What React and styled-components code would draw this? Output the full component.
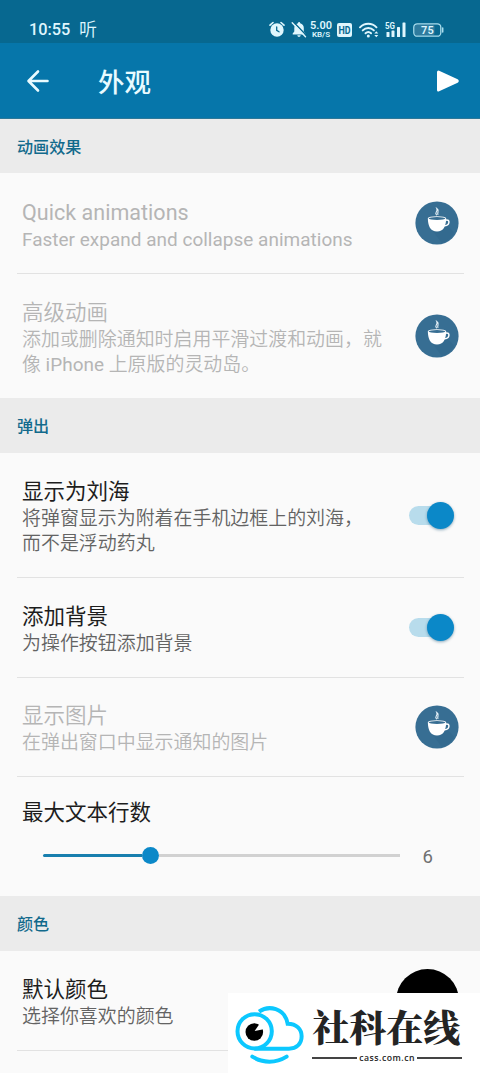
import React from "react";
import styled, { createGlobalStyle } from "styled-components";

const GlobalStyle = createGlobalStyle`
  * {
    box-sizing: border-box;
  }
  body {
    margin: 0;
    background: #fafafa;
    font-family: Roboto, "Noto Sans CJK SC", sans-serif;
    overflow: hidden;
  }
`;

const Screen = styled.div`
  position: relative;
  width: 480px;
  height: 1073px;
  overflow: hidden;
  background: #fafafa;
`;

const StatusBar = styled.div`
  display: flex;
  align-items: center;
  height: 43px;
  padding: 16px 36px 0 29px;
  background: #076890;
  color: #dff6fd;
`;

const Clock = styled.span`
  width: 50px;
  font-size: 16.3px;
  font-weight: 500;
  line-height: 26px;
`;

const Carrier = styled.span`
  flex: 1;
  padding-top: 1px;
  font-size: 18px;
  font-weight: 350;
  line-height: 24px;
`;

const StatusIcons = styled.div`
  display: flex;
  align-items: center;
  height: 24px;
`;

const StatusIcon = styled.svg`
  display: block;
  flex: none;
  margin-left: ${props => props.$gap || 0}px;
`;

const Speed = styled.div`
  width: 24px;
  margin-left: 2px;
  text-align: center;
  font-weight: 600;
  font-size: 11px;
  line-height: 10px;
  span {
    display: block;
    font-size: 8px;
    line-height: 8px;
  }
`;

const Toolbar = styled.header`
  display: flex;
  align-items: center;
  height: 76px;
  padding: 0 19px 0 26px;
  background: #0676aa;
  border-bottom: 1px solid #2d7898;
  color: #e9fbff;
`;

const Title = styled.h1`
  flex: 1;
  margin: 4px 0 0 48px;
  font-size: 26.5px;
  font-weight: 500;
  line-height: 40px;
`;

const Category = styled.h2`
  display: flex;
  align-items: center;
  height: ${props => props.$height || 55}px;
  margin: 0;
  padding: 0 0 1px 17px;
  background: #ebebeb;
  color: #126a8c;
  font-size: 16.1px;
  font-weight: 500;
`;

const Row = styled.div`
  display: flex;
  align-items: center;
  justify-content: space-between;
  height: ${props => props.$height}px;
  margin: 0 16px 0 17px;
  padding: 0 5px;
  border-bottom: ${props => (props.$last ? "none" : "1px solid #e2e2e2")};
  color: ${props => (props.$disabled ? "#b5b5b5" : "#1d1d1d")};
`;

const Label = styled.div`
  font-size: 21.5px;
  font-weight: ${props => (props.$light ? 350 : 400)};
  line-height: 29px;
  white-space: nowrap;
`;

const Summary = styled.div`
  color: ${props => (props.$disabled ? "#b5b5b5" : "#636363")};
  font-size: 18.95px;
  font-weight: 350;
  line-height: 24.8px;
  white-space: nowrap;
`;

const Latin = styled.span`
  font-weight: 400;
  letter-spacing: 0.03px;
`;

const Texts = styled.div`
  flex: 1;
  padding-top: 4px;
  ${Label} {
    margin-bottom: 1px;
  }
`;

const Track = styled.div`
  display: flex;
  align-items: center;
  justify-content: flex-end;
  width: 45px;
  height: 19px;
  margin-right: 5px;
  border-radius: 10px;
  background: linear-gradient(to right, #b8dcec 36px, transparent 36px);
`;

const Thumb = styled.div`
  width: 27px;
  height: 27px;
  border-radius: 50%;
  background: #0b88c8;
  box-shadow: 0 1px 3px rgba(0, 70, 110, 0.45);
`;

const SliderBlock = styled.div`
  height: 119px;
  padding: 21px 47px 0 22px;
  color: #1d1d1d;
`;

const SliderLine = styled.div`
  display: flex;
  align-items: center;
  height: 28px;
  margin-top: 14.5px;
  padding-left: 21px;
`;

const SliderFill = styled.div`
  width: 99px;
  height: 3px;
  background: #187fae;
  border-radius: 2px 0 0 2px;
`;

const SliderKnob = styled.div`
  width: 17px;
  height: 17px;
  border-radius: 50%;
  background: #0b88c8;
`;

const SliderRest = styled.div`
  width: 241px;
  height: 3px;
  background: #d1d1d1;
`;

const SliderValue = styled.span`
  flex: 1;
  color: #707070;
  font-size: 18.5px;
  line-height: 28px;
  padding-top: 3px;
  text-align: right;
`;

const Swatch = styled.div`
  width: 63px;
  height: 63px;
  border-radius: 50%;
  background: #000;
`;

const Watermark = styled.div`
  position: absolute;
  right: 0;
  bottom: 0;
  display: flex;
  width: 252px;
  height: 80px;
  padding: 10px 18px 0 5px;
  background: #fff;
`;

const Brand = styled.div`
  flex: 1;
  margin-left: 6px;
  color: #242424;
`;

const BrandName = styled.div`
  margin: 1px 0 5px;
  font-family: "Noto Serif CJK SC", "Noto Sans CJK SC", serif;
  font-size: 37px;
  font-weight: 900;
  line-height: 44px;
  white-space: nowrap;
`;

const BrandSite = styled.div`
  display: flex;
  align-items: center;
  font-family: "Open Sans", sans-serif;
  font-size: 8.7px;
  font-weight: 600;
  letter-spacing: 0.5px;
  line-height: 10px;
  &::before,
  &::after {
    content: "";
    flex: 1;
    height: 2px;
    background: #444;
  }
  span {
    margin: 0 2px;
  }
`;

const Alarm = () => (
  <StatusIcon width="16" height="17" viewBox="0 0 16 17">
    <circle cx="8" cy="9" r="6.7" fill="currentColor" />
    <path d="M1 4.2 4 1.5M15 4.2 12 1.5" stroke="currentColor" strokeWidth="1.6" strokeLinecap="round" />
    <path d="M7.7 6v3.4l2.3 1.4" fill="none" stroke="#076890" strokeWidth="1.3" strokeLinecap="round" />
  </StatusIcon>
);

const Muted = () => (
  <StatusIcon width="16" height="17" viewBox="0 0 16 17" $gap={6}>
    <path d="M7 2.2a1.1 1.1 0 0 1 2.2 0c2.3.6 3.6 2.3 3.6 4.8v3.6l1.5 1.8v1H1.7v-1l1.6-1.8V7c0-2.5 1.4-4.2 3.7-4.8zM6.3 14.3h3.4c-.2 1-.8 1.6-1.7 1.6s-1.5-.6-1.7-1.6z" fill="currentColor" />
    <path d="M2.4 1 15.5 14.6" stroke="#076890" strokeWidth="1.5" />
    <path d="M1.2 1.8 14.5 15.7" stroke="currentColor" strokeWidth="1.4" strokeLinecap="round" />
  </StatusIcon>
);

const HdBadge = () => (
  <StatusIcon width="15" height="14" viewBox="0 0 15 14" $gap={4}>
    <rect width="15" height="14" rx="2" fill="currentColor" />
    <text x="7.5" y="10.8" textAnchor="middle" fontSize="10" fontWeight="700" fill="#076890" textLength="12" lengthAdjust="spacingAndGlyphs">HD</text>
  </StatusIcon>
);

const Wifi = () => (
  <StatusIcon width="20" height="16" viewBox="0 0 20 16" $gap={7}>
    <g fill="none" stroke="currentColor" strokeWidth="1.9" strokeLinecap="round">
      <path d="M1 5.3C5.5.5 13 .5 17.5 5.3" />
      <path d="M3.7 8.4c3.2-3.3 8-3.3 11.2 0" />
      <path d="M6.5 11.3c1.7-1.6 3.9-1.6 5.6 0" />
    </g>
    <circle cx="9.3" cy="14" r="1.5" fill="currentColor" />
    <path d="M17.3 9.3l2 2.3h-4zM17.3 15.3l-2-2.3h4z" fill="currentColor" />
  </StatusIcon>
);

const Signal = () => (
  <StatusIcon width="22" height="17" viewBox="0 0 22 17" $gap={6}>
    <text x="0" y="7.5" fontSize="8.5" fontWeight="700" fill="currentColor" textLength="10" lengthAdjust="spacingAndGlyphs">5G</text>
    <g fill="currentColor">
      <rect x="1.5" y="11" width="3" height="5" rx=".6" />
      <rect x="6.5" y="9.5" width="3" height="6.5" rx=".6" />
      <rect x="12" y="6" width="3" height="10" rx=".6" />
      <rect x="17.5" y="1.5" width="3" height="14.5" rx=".6" />
    </g>
  </StatusIcon>
);

const Battery = () => (
  <StatusIcon width="31" height="14" viewBox="0 0 31 14" $gap={6}>
    <rect x="1.6" y="1.5" width="20" height="11" rx="2.5" fill="#2f7b9e" />
    <rect x=".8" y=".8" width="27" height="12.4" rx="3.5" fill="none" stroke="#a9dcec" strokeWidth="1.3" />
    <path d="M29.7 5v4" stroke="#a9dcec" strokeWidth="1.5" strokeLinecap="round" />
    <text x="14.4" y="10.9" textAnchor="middle" fontSize="11" fontWeight="600" fill="currentColor">75</text>
  </StatusIcon>
);

const BackArrow = () => (
  <svg width="24" height="24" viewBox="0 0 24 24" fill="none" stroke="currentColor" strokeWidth="2.6" strokeLinecap="round" strokeLinejoin="round">
    <path d="M21.5 12H3M12 2.5 2.5 12l9.5 9.5" />
  </svg>
);

const Play = () => (
  <svg width="25" height="24" viewBox="0 0 25 24">
    <path d="M2.5 3 21 11.6a.5.5 0 0 1 0 .9L2.500 21z" fill="#fff" stroke="#fff" strokeWidth="3" strokeLinejoin="round" />
  </svg>
);

const Coffee = () => (
  <svg width="44" height="44" viewBox="0 0 44 44">
    <circle cx="22" cy="22" r="21.6" fill="#376e93" />
    <path d="M14 25 27 42a20 20 0 0 0 12-10L30 22z" fill="#2f658b" opacity=".5" />
    <path d="M12.8 17.2c.2 8 2.8 13.300 9.200 13.300s9-5.300 9.200-13.300z" fill="#fff" />
    <ellipse cx="22" cy="17.2" rx="9.2" ry="2" fill="#fff" />
    <ellipse cx="22" cy="17.5" rx="8.3" ry="1.5" fill="#376e93" />
    <path d="M30.5 19.2c2.6-.8 3.7.6 3.4 2.4-.4 2-2.2 3.2-5 3.2" fill="none" stroke="#fff" strokeWidth="1.5" />
    <path d="M21.5 13.8c-2.6-2.2 1.8-2.9.3-6.3 3.2 2.2.1 3.7 1.1 6" fill="none" stroke="#e9f4fa" strokeWidth="1.1" strokeLinecap="round" />
  </svg>
);

const CloudLogo = () => (
  <svg width="73.3" height="63.3" viewBox="40 130 220 190">
    <g fill="none" stroke="#0cc8ff" strokeWidth="12">
      <path d="M118 156c29-20 77-12 86 36 27 0 42 17 42 38 0 23-16 37-38 37H104" />
      <circle cx="105" cy="215" r="51.5" />
      <path d="M98 291c32 20 71 20 103 0" strokeLinecap="round" />
    </g>
    <circle cx="104" cy="217" r="26.5" fill="#000" />
    <path d="M105 214 122 189 136 208z" fill="#fff" />
  </svg>
);

const Toggle = () => (
  <Track>
    <Thumb />
  </Track>
);

// Latin words keep the regular weight next to the lighter Chinese text
const renderText = text =>
  text
    .split(/([A-Za-z][A-Za-z ]*[A-Za-z])/)
    .map((part, i) => (i % 2 ? <Latin key={i}>{part}</Latin> : part));

const Setting = ({ title, lines, height, disabled, last, children }) => (
  <Row $height={height} $disabled={disabled} $last={last}>
    <Texts>
      <Label $light={disabled}>{renderText(title)}</Label>
      {lines.map(line => (
        <Summary key={line} $disabled={disabled}>{renderText(line)}</Summary>
      ))}
    </Texts>
    {children}
  </Row>
);

const App = () => (
  <Screen>
    <GlobalStyle />
    <StatusBar>
      <Clock>10:55</Clock>
      <Carrier>听</Carrier>
      <StatusIcons>
        <Alarm />
        <Muted />
        <Speed>
          5.00<span>KB/S</span>
        </Speed>
        <HdBadge />
        <Wifi />
        <Signal />
        <Battery />
      </StatusIcons>
    </StatusBar>
    <Toolbar>
      <BackArrow />
      <Title>外观</Title>
      <Play />
    </Toolbar>

    <Category $height={54}>动画效果</Category>
    <Setting title="Quick animations" lines={["Faster expand and collapse animations"]} height={101} disabled>
      <Coffee />
    </Setting>
    <Setting
      title="高级动画"
      lines={["添加或删除通知时启用平滑过渡和动画，就", "像 iPhone 上原版的灵动岛。"]}
      height={124}
      disabled
      last
    >
      <Coffee />
    </Setting>

    <Category>弹出</Category>
    <Setting title="显示为刘海" lines={["将弹窗显示为附着在手机边框上的刘海，", "而不是浮动药丸"]} height={125}>
      <Toggle />
    </Setting>
    <Setting title="添加背景" lines={["为操作按钮添加背景"]} height={99.5}>
      <Toggle />
    </Setting>
    <Setting title="显示图片" lines={["在弹出窗口中显示通知的图片"]} height={99.5} disabled>
      <Coffee />
    </Setting>
    <SliderBlock>
      <Label>最大文本行数</Label>
      <SliderLine>
        <SliderFill />
        <SliderKnob />
        <SliderRest />
        <SliderValue>6</SliderValue>
      </SliderLine>
    </SliderBlock>

    <Category>颜色</Category>
    <Setting title="默认颜色" lines={["选择你喜欢的颜色"]} height={100}>
      <Swatch />
    </Setting>

    <Watermark>
      <CloudLogo />
      <Brand>
        <BrandName>社科在线</BrandName>
        <BrandSite>
          <span>cass.com.cn</span>
        </BrandSite>
      </Brand>
    </Watermark>
  </Screen>
);

export default App;
